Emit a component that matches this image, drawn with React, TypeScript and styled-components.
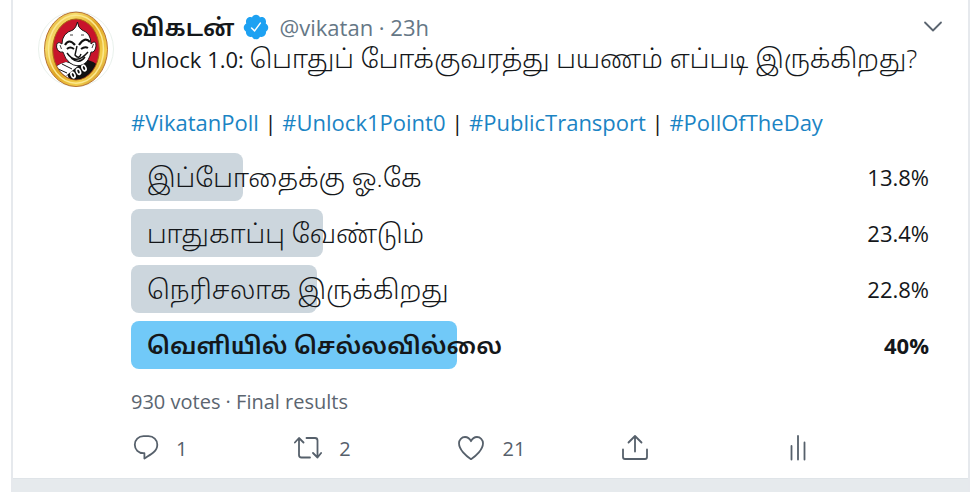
import React from 'react';
import styled, { createGlobalStyle } from 'styled-components';

const GlobalStyle = createGlobalStyle`
  *, *::before, *::after { box-sizing: border-box; }
  body {
    margin: 0;
    background: #ffffff;
    color: #14171a;
    font-family: 'Open Sans', 'Noto Sans', 'Noto Sans Tamil', sans-serif;
  }
`;

const Timeline = styled.main`
  margin: 0 1px 0 11px;
  border: solid #e6e9ed;
  border-width: 0 2px;
  min-height: 100vh;
  display: flex;
  flex-direction: column;
`;

const Tweet = styled.article`
  display: grid;
  grid-template-columns: 76px minmax(0, 1fr);
  column-gap: 17px;
  padding: 11px 39px 14px 25px;
`;

const Divider = styled.div`
  flex: 1;
  min-height: 13px;
  background: #e6eaed;
  border-top: 1px solid #dfe4e8;
`;

const Content = styled.div`
  display: flex;
  flex-direction: column;
`;

const Header = styled.header`
  display: flex;
  align-items: center;
  height: 32px;
  gap: 10px;
`;

const Author = styled.span`
  display: flex;
  align-items: center;
  gap: 7px;
  font-size: 24px;
  font-weight: 600;
  white-space: nowrap;
`;

const Meta = styled.span`
  flex: 1;
  color: #657786;
  font-size: 22px;
  white-space: nowrap;
`;

const MenuButton = styled.button`
  display: flex;
  padding: 0;
  border: 0;
  background: none;
  color: #5b6570;
  margin-right: -18px;
  cursor: pointer;
`;

const Text = styled.p`
  margin: 0;
  font-size: 22px;
  line-height: 32px;
  white-space: nowrap;
`;

const Tamil = styled.span.attrs({ lang: 'ta' })`
  font-size: 26px;
  line-height: 24px;
  font-weight: 300;
`;

const Tags = styled(Text)`
  margin-top: 31px;
`;

const Tag = styled.a`
  color: #1b84c4;
  text-decoration: none;
`;

const Poll = styled.ul`
  list-style: none;
  margin: 15px 0 0;
  padding: 0;
  display: grid;
  gap: 8px;
`;

const Option = styled.li<{ $winner?: boolean }>`
  display: grid;
  grid-template-columns: 1fr auto;
  align-items: center;
  height: 48px;
  font-size: 22px;
  font-weight: ${(p) => (p.$winner ? 700 : 400)};
  white-space: nowrap;
`;

const Bar = styled.span<{ $winner?: boolean }>`
  grid-area: 1 / 1 / 2 / 3;
  height: 48px;
  border-radius: 8px;
  background: ${(p) => (p.$winner ? '#71c9f8' : '#ccd6dd')};
`;

const OptionLabel = styled.span<{ $winner?: boolean }>`
  grid-area: 1 / 1;
  padding-left: 16px;
  line-height: 32px;
  font-size: ${(p) => (p.$winner ? 24 : 26)}px;
  font-weight: ${(p) => (p.$winner ? 600 : 300)};
`;

const Share = styled.span`
  grid-area: 1 / 2;
`;

const Summary = styled.p`
  margin: 17px 0 0;
  color: #5b6570;
  font-size: 20px;
  line-height: 32px;
`;

const Actions = styled.div`
  display: grid;
  grid-template-columns: repeat(4, 9fr) 8fr;
  margin-top: 14px;
`;

const Action = styled.button`
  display: flex;
  align-items: center;
  gap: 17px;
  height: 32px;
  padding: 0;
  border: 0;
  background: none;
  color: #56606b;
  font: inherit;
  font-size: 20px;
  cursor: pointer;
`;

const AvatarArt = styled.svg`
  display: block;
  width: 76px;
  height: 76px;
`;

const Glyph = styled.svg`
  display: block;
  width: 28px;
  height: 28px;
  fill: none;
  stroke: currentColor;
  stroke-width: 1.8;
  stroke-linecap: round;
  stroke-linejoin: round;
`;

const Badge = styled.svg`
  display: block;
  width: 28px;
  height: 28px;
`;

const Avatar = () => (
  <AvatarArt viewBox="0 0 76 76" role="img" aria-label="விகடன்">
    <defs>
      <linearGradient id="gold" x1="0" y1="0" x2="1" y2="1">
        <stop offset="0" stopColor="#d99a1c" />
        <stop offset="0.25" stopColor="#f6dc6a" />
        <stop offset="0.5" stopColor="#e0a521" />
        <stop offset="0.75" stopColor="#f3cf4c" />
        <stop offset="1" stopColor="#bd7a16" />
      </linearGradient>
      <clipPath id="oval"><ellipse cx="38" cy="38.5" rx="22.8" ry="30" /></clipPath>
    </defs>
    <circle cx="38" cy="38" r="37.5" fill="#fff" stroke="#e9f1ec" />
    <ellipse cx="38" cy="38.3" rx="31.5" ry="37.2" fill="url(#gold)" stroke="#b87333" strokeWidth="1" />
    <ellipse cx="38" cy="38.3" rx="27.5" ry="34" fill="none" stroke="#fbe88f" strokeWidth="1.5" />
    <ellipse cx="38" cy="38.5" rx="23.3" ry="30.5" fill="#c8142b" stroke="#a86a12" strokeWidth="1" />
    <g clipPath="url(#oval)">
      <path d="M50 49 Q61 52 65 60 L62 72 H22 L14 58 Q19 53 28 51 Z" fill="#111" />
      <path d="M14 58 Q20 53 28 51 L40 55 L24 68 Z" fill="#fff" />
      <path d="M18 57 L29 62 M24 53 L34 58" stroke="#111" strokeWidth="1" />
      <path d="M39.5 11 Q40 17 44 19 Q53 22 53 33 Q58 28 58 35 Q57 42 53 41 Q51 50 46 53 Q39 57 32 52 Q27 48 25 41 Q20 42 18.5 36 Q18.5 29 24 33 Q24 22 35 19 Q38 17 39.5 11 Z" fill="#fff" stroke="#111" strokeWidth="0.9" />
      <path d="M27 34 Q31 27 37 34 M41 34 Q47 25 52 31" fill="none" stroke="#111" strokeWidth="2.2" />
      <path d="M29 38 Q32 35 36 38 M43 38 Q47 35 50 37" fill="none" stroke="#111" strokeWidth="2" />
      <path d="M39 35 L37 44 Q41 49 43 43 M29 42 Q38 55 50 41 M33 47 Q41 54 47 46" fill="none" stroke="#111" strokeWidth="1.4" />
      <path d="M22 34 l1.5 4 M55.5 33 l-1.5 4 M32 24 h3 M43 24 h3" stroke="#111" strokeWidth="0.8" />
      <path d="M28.5 64.5l2.5 5" stroke="#fff" strokeWidth="1.8" />
      <g fill="none" stroke="#fff" strokeWidth="1.7">
        <ellipse cx="35" cy="64" rx="1.8" ry="2.9" transform="rotate(-24 35 64)" />
        <ellipse cx="40.5" cy="60.5" rx="1.8" ry="2.9" transform="rotate(-24 40.5 60.5)" />
        <ellipse cx="46" cy="57" rx="1.8" ry="2.9" transform="rotate(-24 46 57)" />
      </g>
    </g>
  </AvatarArt>
);

const Verified = () => (
  <Badge viewBox="0 0 24 24" role="img" aria-label="Verified">
    <path
      fill="#1da1f2"
      d="M22.5 12.5c0-1.58-.875-2.95-2.148-3.6.154-.435.238-.905.238-1.4 0-2.21-1.71-3.998-3.818-3.998-.47 0-.92.084-1.336.25C14.818 2.415 13.51 1.5 12 1.5s-2.816.917-3.437 2.25c-.415-.165-.866-.25-1.336-.25-2.11 0-3.818 1.79-3.818 4 0 .494.083.964.237 1.4-1.272.65-2.147 2.018-2.147 3.6 0 1.495.782 2.798 1.942 3.486-.02.17-.032.34-.032.514 0 2.21 1.708 4 3.818 4 .47 0 .92-.086 1.335-.25.62 1.334 1.926 2.25 3.437 2.25 1.512 0 2.818-.916 3.437-2.25.415.163.865.248 1.336.248 2.11 0 3.818-1.79 3.818-4 0-.174-.012-.344-.033-.513 1.158-.687 1.943-1.99 1.943-3.484z"
    />
    <path d="M8.2 12.8l2.6 2.5 4.9-6.6" fill="none" stroke="#fff" strokeWidth="1.3" strokeLinecap="round" strokeLinejoin="round" />
  </Badge>
);

const ReplyIcon = () => (
  <Glyph viewBox="0 0 28 28">
    <path d="M12.5 2.2h5c5 0 8.8 3.6 8.8 8.5 0 3-1.4 5.6-3.7 7.5-2 1.7-6 4.2-9.2 6.4v-5.4h-.9c-5 0-8.7-3.6-8.7-8.5s3.7-8.5 8.7-8.5z" />
  </Glyph>
);

const RetweetIcon = () => (
  <Glyph viewBox="0 0 28 28">
    <path d="M0.9 8.5L5 4 9.5 8.5M5 4.5v16.5q0 2.5 2.5 2.5h8.500M12.5 4h8.500q2.5 0 2.5 2.5v17M19 19l4.5 4.5 3.6-4.5" />
  </Glyph>
);

const LikeIcon = () => (
  <Glyph viewBox="0 0 28 28">
    <path d="M14 25.2C9 22 2 15.6 2 9.3 2 5.600 4.8 3 8 3c2.7 0 4.8 1.7 6 4.200C15.2 4.7 17.3 3 20 3c3.2 0 6 2.6 6 6.3 0 6.3-7 12.7-12 15.9z" />
  </Glyph>
);

const ShareIcon = () => (
  <Glyph viewBox="0 0 28 28">
    <path d="M14 17.5V2M7.5 8.500L14 2 20.5 8.500M2 15.5v7.500q0 2 2 2h20q2 0 2-2V15.5" />
  </Glyph>
);

const StatsIcon = () => (
  <Glyph viewBox="0 0 28 28">
    <path d="M14 2v23.5M7.5 12v13.5M20.5 8.5v17" />
  </Glyph>
);

const ChevronIcon = () => (
  <Glyph viewBox="0 0 28 28">
    <path d="M6 9.5l8 8 8-8" />
  </Glyph>
);

const tags = ['#VikatanPoll', '#Unlock1Point0', '#PublicTransport', '#PollOfTheDay'];

const options = [
  { label: 'இப்போதைக்கு ஓ.கே', share: '13.8%', bar: 14 },
  { label: 'பாதுகாப்பு வேண்டும்', share: '23.4%', bar: 24 },
  { label: 'நெரிசலாக இருக்கிறது', share: '22.8%', bar: 23.3 },
  { label: 'வெளியில் செல்லவில்லை', share: '40%', bar: 40.9, winner: true },
];

const actions = [
  { name: 'Reply', count: '1', Icon: ReplyIcon },
  { name: 'Retweet', count: '2', Icon: RetweetIcon },
  { name: 'Like', count: '21', Icon: LikeIcon },
  { name: 'Share', count: '', Icon: ShareIcon },
  { name: 'Analytics', count: '', Icon: StatsIcon },
];

export default function App() {
  return (
    <>
      <GlobalStyle />
      <Timeline>
        <Tweet>
          <Avatar />
          <Content>
            <Header>
              <Author>
                விகடன்
                <Verified />
              </Author>
              <Meta>@vikatan · 23h</Meta>
              <MenuButton aria-label="More">
                <ChevronIcon />
              </MenuButton>
            </Header>
            <Text>
              Unlock 1.0: <Tamil>பொதுப் போக்குவரத்து பயணம் எப்படி இருக்கிறது?</Tamil>
            </Text>
            <Tags>
              {tags.map((tag, i) => (
                <React.Fragment key={tag}>
                  {i > 0 && ' | '}
                  <Tag href={tag}>{tag}</Tag>
                </React.Fragment>
              ))}
            </Tags>
            <Poll>
              {options.map((o) => (
                <Option key={o.label} $winner={o.winner}>
                  <Bar $winner={o.winner} style={{ width: `${o.bar}%` }} />
                  <OptionLabel $winner={o.winner}>{o.label}</OptionLabel>
                  <Share>{o.share}</Share>
                </Option>
              ))}
            </Poll>
            <Summary>930 votes · Final results</Summary>
            <Actions>
              {actions.map(({ name, count, Icon }) => (
                <Action key={name} aria-label={`${name} ${count}`.trim()}>
                  <Icon />
                  {count}
                </Action>
              ))}
            </Actions>
          </Content>
        </Tweet>
        <Divider />
      </Timeline>
    </>
  );
}
